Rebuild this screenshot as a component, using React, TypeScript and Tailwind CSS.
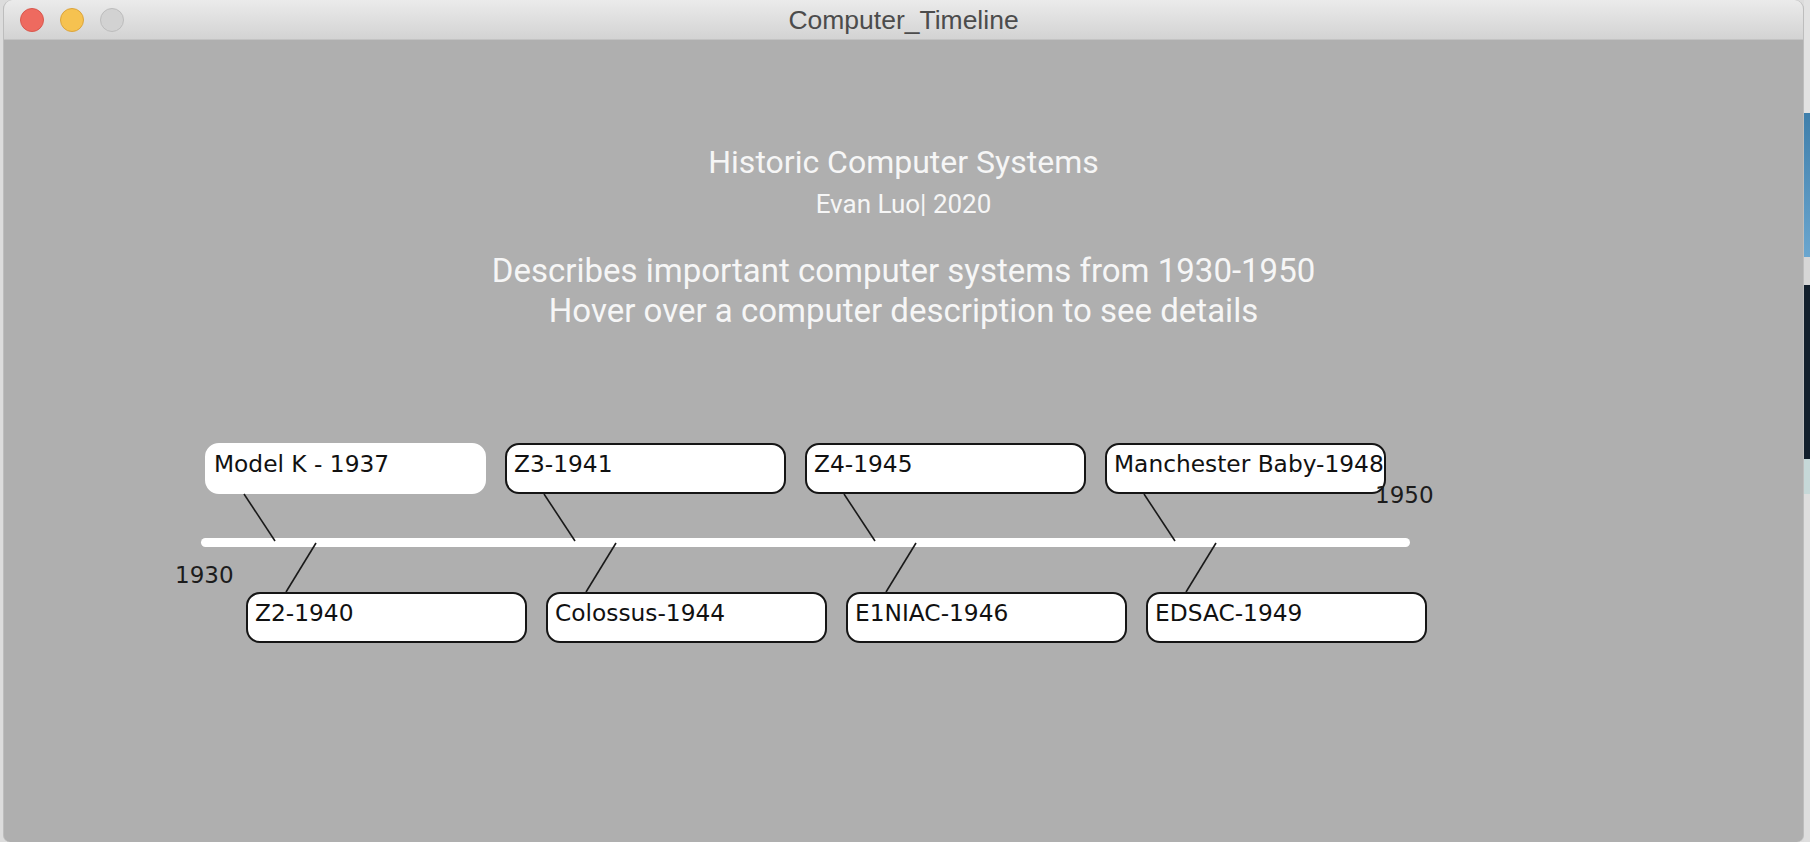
import React from "react";

const topItems = [
  { label: "Model K - 1937", left: 204, plain: true },
  { label: "Z3-1941", left: 504 },
  { label: "Z4-1945", left: 804 },
  { label: "Manchester Baby-1948", left: 1104 },
];

const bottomItems = [
  { label: "Z2-1940", left: 245 },
  { label: "Colossus-1944", left: 545 },
  { label: "E1NIAC-1946", left: 845 },
  { label: "EDSAC-1949", left: 1145 },
];

const boxFont = { fontFamily: '"DejaVu Sans", Verdana, sans-serif' };
const headFont = { fontFamily: 'Roboto, "Noto Sans", sans-serif' };

const Box = ({ label, plain }: { label: string; plain?: boolean }) => (
  <div
    className={`h-[51px] w-[281px] shrink-0 whitespace-nowrap rounded-[14px] border-2 bg-white pl-[7px] pt-[5px] text-[23.3px] leading-[28px] text-[#111] ${
      plain ? "border-white" : "border-[#151515]"
    }`}
    style={boxFont}
  >
    {label}
  </div>
);

const Timeline = () => {
  // window starts 3px into the page
  const ox = 3;
  return (
    <div className="relative mt-[112px]">
      <div className="flex gap-[19px] pl-[201px]">
        {topItems.map((it) => (
          <Box key={it.label} label={it.label} plain={it.plain} />
        ))}
      </div>

      <div className="relative flex h-[98px] flex-col">
        <div className="ml-[197px] mt-[44px] h-[9px] w-[1209px] rounded-full bg-white" />
        <p className="ml-[171px] mt-[14px] text-[23px] leading-[28px] text-[#1c1c1c]" style={boxFont}>
          1930
        </p>
        <p
          className="absolute left-[1371px] top-[-13px] text-[23px] leading-[28px] text-[#1c1c1c]"
          style={boxFont}
        >
          1950
        </p>
      </div>

      <div className="flex gap-[19px] pl-[242px]">
        {bottomItems.map((it) => (
          <Box key={it.label} label={it.label} />
        ))}
      </div>

      <svg className="pointer-events-none absolute inset-0 h-full w-full">
        {topItems.map((it) => (
          <line
            key={it.label}
            x1={it.left - ox + 39}
            y1={51}
            x2={it.left - ox + 70}
            y2={98}
            stroke="#1a1a1a"
            strokeWidth={1.6}
          />
        ))}
        {bottomItems.map((it) => (
          <line
            key={it.label}
            x1={it.left - ox + 70}
            y1={100}
            x2={it.left - ox + 40}
            y2={149}
            stroke="#1a1a1a"
            strokeWidth={1.6}
          />
        ))}
      </svg>
    </div>
  );
};

const TitleBar = () => (
  <div className="grid h-[40px] shrink-0 grid-cols-[1fr_auto_1fr] items-center border-b border-[#c3c3c3] bg-gradient-to-b from-[#ebebeb] to-[#d3d3d3]">
    <div className="flex gap-[16px] pl-[16px]">
      <span className="h-[24px] w-[24px] rounded-full border border-[#d8584e] bg-[#ee6a5f]" />
      <span className="h-[24px] w-[24px] rounded-full border border-[#dba43c] bg-[#f6c250]" />
      <span className="h-[24px] w-[24px] rounded-full border border-[#bcbcbc] bg-[#d2d2d2]" />
    </div>
    <p
      className="pt-[2px] text-[26.5px] leading-none text-[#4c4c4c]"
      style={{ fontFamily: '"Liberation Sans", Arial, sans-serif' }}
    >
      Computer_Timeline
    </p>
    <div />
  </div>
);

export default function App() {
  return (
    <div className="flex h-[842px] w-[1810px] overflow-hidden bg-[#dcdcdc]">
      <div className="ml-[3px] flex w-[1801px] shrink-0 flex-col overflow-hidden rounded-t-[9px] rounded-b-[7px] border-x border-[#bdbdbd] bg-[#afafaf]">
        <TitleBar />
        <div className="flex flex-1 flex-col items-center text-[#f6f6f6]" style={headFont}>
          <p className="mt-[104px] text-[32px] leading-[36px]">Historic Computer Systems</p>
          <p className="mt-[10px] text-[26px] leading-[28px]">Evan Luo| 2020</p>
          <p className="mt-[33px] text-[33px] leading-[40px]">
            Describes important computer systems from 1930-1950
          </p>
          <p className="text-[33px] leading-[40px]">Hover over a computer description to see details</p>
          <div className="w-full">
            <Timeline />
          </div>
        </div>
      </div>
      <div className="flex flex-1 flex-col">
        <div className="h-[113px] bg-[#e2e2e2]" />
        <div className="h-[144px] bg-gradient-to-b from-[#3f7fab] to-[#6aa6cf]" />
        <div className="h-[28px] bg-[#d6d6d6]" />
        <div className="h-[174px] bg-[#13202d]" />
        <div className="h-[35px] bg-[#c6d8d8]" />
        <div className="flex-1 bg-[#dedede]" />
      </div>
    </div>
  );
}
